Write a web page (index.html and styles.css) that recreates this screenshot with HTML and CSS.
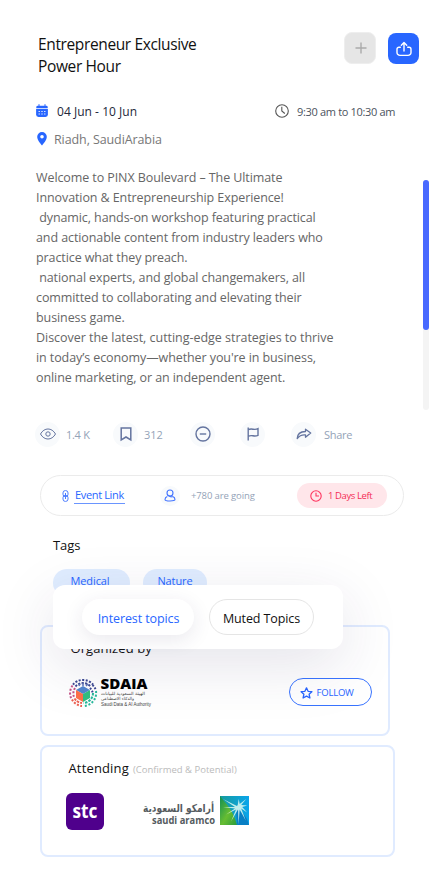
FILE: index.html
```html
<!DOCTYPE html>
<html lang="en">
<head>
<meta charset="utf-8">
<title>Entrepreneur Exclusive Power Hour</title>
<link rel="stylesheet" href="styles.css">
</head>
<body>
<main class="page">
  <header class="header">
    <h1 class="title"><span class="title-a">Entrepreneur Exclusive</span><br><span class="title-b">Power Hour</span></h1>
    <button class="icon-btn add" aria-label="Add"><svg width="12" height="12" viewBox="0 0 12 12"><path d="M6 .5v11M.5 6h11" stroke="#aaa" stroke-width="1.4"/></svg></button>
    <button class="icon-btn share" aria-label="Share"><svg width="16" height="16" viewBox="0 0 16 16" fill="none" stroke="#fff" stroke-width="1.4" stroke-linecap="round" stroke-linejoin="round"><path d="M8 10V2M5.3 4.3 8 1.6l2.700 2.700M4.300 6.200H3A2 2 0 0 0 1 8.200v3.200A3 3 0 0 0 4 14.400h8a3 3 0 0 0 3-3V8.200a2 2 0 0 0-2-2h-1.300"/></svg></button>
  </header>

  <div class="when">
    <svg width="12" height="14" viewBox="0 0 12 14"><path d="M.1 5h11.800v5.600A2.400 2.400 0 0 1 9.500 13H2.500A2.400 2.400 0 0 1 .1 10.600z" fill="#2866ff"/><path d="M.3 4.300V3q0-1.300 1.500-1.300h8.400q1.500 0 1.500 1.300v1.300z" fill="#2866ff"/><path d="M3 .2v2.300M9 .2v2.300" stroke="#2866ff" stroke-width="1"/><path d="M2.600 7.500h1.200m1.600 0h1.200m1.600 0h1.200M2.600 10h1.200m1.600 0h1.200m1.600 0h1.200" stroke="#fff" stroke-width="1.100"/></svg>
    <span class="date">04 Jun - 10 Jun</span>
    <svg class="clock" width="14" height="14" viewBox="0 0 14 14" fill="none" stroke="#555" stroke-width="1.100"><circle cx="7" cy="7" r="6.300"/><path d="M6.800 2.800V7l3 2.500"/></svg>
    <span class="time">9:30 am to 10:30 am</span>
  </div>
  <div class="where">
    <svg width="10" height="14" viewBox="0 0 10 14"><path fill="#2866ff" fill-rule="evenodd" d="M5 0a4.800 4.800 0 0 1 4.800 4.800C9.800 8.200 6.500 11.500 5 13.500 3.500 11.500.2 8.200.2 4.800A4.800 4.800 0 0 1 5 0zm0 3a1.800 1.800 0 1 0 0 3.600A1.800 1.800 0 0 0 5 3z"/></svg>
    <span class="place">Riadh, SaudiArabia</span>
  </div>

  <section class="about">
    <div class="copy">Welcome to PINX Boulevard – The Ultimate
Innovation &amp; Entrepreneurship Experience!
 dynamic, hands-on workshop featuring practical
and actionable content from industry leaders who
practice what they preach.
 national experts, and global changemakers, all
committed to collaborating and elevating their
business game.
<span class="wide">Discover the latest, cutting-edge strategies to thrive</span>
in today’s economy—whether you're in business,
online marketing, or an independent agent.</div>
    <div class="track"><div class="thumb"></div></div>
  </section>

  <div class="actions">
    <span class="act views"><i class="disc"><svg width="16" height="12" viewBox="0 0 16 12"><path d="M.5 6C4.200-.7 11.800-.7 15.500 6 11.800 12.700 4.200 12.700.5 6z"/><circle cx="8" cy="6" r="2.200"/></svg></i><b>1.4 K</b></span>
    <span class="act saves"><i class="disc"><svg width="12" height="14" viewBox="0 0 12 14" stroke-width="1.500"><path d="M1.200.9h9.600v12L6 10l-4.800 2.900z"/></svg></i><b>312</b></span>
    <span class="act mute"><i class="disc"><svg width="16" height="16" viewBox="0 0 16 16" stroke-width="1.400"><circle cx="8" cy="8" r="7"/><path d="M4.800 8h6.400"/></svg></i></span>
    <span class="act flag"><i class="disc"><svg width="12" height="14" viewBox="0 0 12 14" stroke-width="1.400"><path d="M1.200.5v13M1.200 2.700c4-2 5.500 1 9.800-1v6.600c-4.300 2-5.800-1-9.800 1"/></svg></i></span>
    <span class="act send"><i class="disc"><svg width="16" height="12" viewBox="0 0 16 12" stroke-width="1.300" stroke-linejoin="round"><path d="M9.500 1.200 14.700 5 9.500 9.200V7C5.500 6.600 3.500 7.600 1.200 10.600 1.300 6.300 4.500 3.700 9.500 3.500z"/></svg></i><b>Share</b></span>
  </div>

  <div class="bar">
    <svg class="link-icon" width="7" height="12" viewBox="0 0 7 12" fill="none" stroke="#4a7cff" stroke-width="1"><rect x="1" y=".6" width="5" height="6" rx="2.300"/><rect x="1" y="5.400" width="5" height="6" rx="2.300"/><path d="M3.500 3v6"/></svg>
    <a class="link">Event Link</a>
    <i class="person"><svg width="12" height="13" viewBox="0 0 12 13" fill="none" stroke="#4475ff" stroke-width="1.100"><circle cx="6" cy="4" r="3"/><path d="M3.800 6.200Q6 8.500 8.500 7.600M3.300 7.500C1.500 8.200 1 9.400 1 10.400q0 1.600 5 1.600t5-1.600c0-1-.5-2.200-2.300-2.900"/></svg></i>
    <span class="going">+780 are going</span>
    <span class="left"><svg width="12" height="12" viewBox="0 0 12 12" fill="none" stroke="#ff355f" stroke-width="1.100"><circle cx="6" cy="6" r="5.200"/><path d="M6 2.700V6h3"/></svg><b>1 Days Left</b></span>
  </div>

  <section class="tags">
    <h2 class="tags-title">Tags</h2>
    <div class="chips"><span class="chip medical">Medical</span><span class="chip nature">Nature</span></div>
    <div class="popup">
      <button class="choice interest">Interest topics</button>
      <button class="choice muted">Muted Topics</button>
    </div>
  </section>

  <section class="card organizer">
    <h2 class="card-title org-title">Organized by</h2>
    <div class="org-row">
      <svg class="org-logo" width="84" height="32" viewBox="0 0 84 32">
        <g fill="none" stroke-width="2" stroke-linecap="butt">
          <g stroke="#3b4792"><path d="M4 6.600A13 13 0 0 1 24 6.600" stroke-dasharray="2 1.500"/><path d="M6.500 8.500A10 10 0 0 1 21.500 8.500" stroke-dasharray="2.200 1.300"/><path d="M23.500 7A13 13 0 0 1 26.800 12M21 10a10 10 0 0 1 2.800 5" stroke-dasharray="1.800 1.500"/></g>
          <g stroke="#c65386"><path d="M3.500 7.500A13 13 0 0 0 2.500 21" stroke-dasharray="2 1.700"/><path d="M6 10a10 10 0 0 0-.8 9.500" stroke-dasharray="2 1.500"/></g>
          <g stroke="#ee5f50"><path d="M3 21.500A13 13 0 0 0 13 28" stroke-dasharray="2 1.500"/><path d="M5.500 20.500A10 10 0 0 0 13 25" stroke-dasharray="2.500 1"/></g>
          <g stroke="#27b99b"><path d="M27 13A13 13 0 0 1 14.500 28" stroke-dasharray="2 1.700"/><path d="M24 15A10 10 0 0 1 14.500 25" stroke-dasharray="2.500 1.200"/></g>
        </g>
        <path d="m14 8 7 4-7 4-7-4z" fill="#5287cf"/><path d="m7 12 7 4v8l-7-4z" fill="#ff7049"/><path d="m14 16 7-4v8l-7 4z" fill="#31bf80"/><path d="m10 8 1-2m3 2V5m3 3 2-2" stroke="#6076b8" stroke-width="1.500"/>
        <text class="sdaia" x="31.500" y="11" textLength="47" lengthAdjust="spacingAndGlyphs">SDAIA</text>
        <text class="arabic" x="76" y="16.500" direction="rtl" textLength="44" lengthAdjust="spacingAndGlyphs">الهيئة السعودية للبيانات</text>
        <text class="arabic" x="65" y="22" direction="rtl" textLength="33" lengthAdjust="spacingAndGlyphs">والذكاء الاصطناعي</text>
        <text class="authority" x="32" y="27.500" textLength="50" lengthAdjust="spacingAndGlyphs">Saudi Data &amp; AI Authority</text>
      </svg>
      <button class="follow"><svg width="13" height="12" viewBox="0 0 13 12" fill="none" stroke="#2866ff" stroke-width="1.300" stroke-linejoin="round"><path d="m6.500.9 1.600 3.400 3.800.4-2.800 2.500.8 3.800-3.400-1.900L3.100 11l.8-3.800L1.100 4.700l3.800-.4z"/></svg>FOLLOW</button>
    </div>
  </section>

  <section class="card attending">
    <h2 class="card-title"><span class="att">Attending</span><small>(Confirmed &amp; Potential)</small></h2>
    <div class="logos">
      <svg width="38" height="37" viewBox="0 0 38 37"><rect width="38" height="37" rx="6" fill="#4f008c"/><text class="stc" x="6.500" y="24.500" textLength="25" lengthAdjust="spacingAndGlyphs">stc</text></svg>
      <svg class="aramco" width="108" height="31" viewBox="0 0 108 31">
        <defs>
          <linearGradient id="sky" x1="0" y1="0" x2="1" y2="0"><stop offset="0" stop-color="#169b9c"/><stop offset="1" stop-color="#0aa5ec"/></linearGradient>
          <linearGradient id="land" x1="0" y1="0" x2="1" y2="1"><stop offset="0" stop-color="#108d55"/><stop offset=".55" stop-color="#67bd32"/><stop offset="1" stop-color="#2b9b3c"/></linearGradient>
        </defs>
        <text class="ar-name" x="72" y="17" direction="rtl" textLength="71" lengthAdjust="spacingAndGlyphs">أرامكو السعودية</text>
        <text class="en-name" x="10" y="29" textLength="63" lengthAdjust="spacingAndGlyphs">saudi aramco</text>
        <rect x="78" y="1" width="29" height="29" fill="url(#sky)"/>
        <path d="M78 1c5 7 13 13 17 29H78z" fill="url(#land)"/><path d="M94 14c7 3 11 8 13 16H95z" fill="#087fc4"/>
        <path d="m95 11-14-7 12 8-12 0 12 1.500-9 6 10-5-5 12 7-12 .5 15 1.200-15 6 11-4.500-12 6 4-5-5.500 5-1.500-6-.5 5-6-6.500 5-1-5-1 6z" fill="#eafff4" opacity=".8"/>
      </svg>
    </div>
  </section>
</main>
</body>
</html>
```
FILE: styles.css
```css
* { box-sizing: border-box; }
body { margin: 0; background: #fff; font-family: "Open Sans", "Noto Sans", sans-serif; font-size: 12px; color: #000; }
h1, h2 { margin: 0; font-weight: 400; }
b, i { font-weight: inherit; font-style: normal; }
button { padding: 0; border: 0; font: inherit; }
svg { display: block; flex: none; overflow: visible; }
span, a, b, button { white-space: nowrap; }
.page { width: 442px; height: 890px; overflow: hidden; position: relative; display: flex; flex-direction: column; }

.header { display: flex; height: 66px; margin: 32px 0 0 38px; }
.title { width: 306px; font-size: 15.500px; line-height: 22px; padding-top: 1px; color: #111; }
.title-a { letter-spacing: -.37px; }
.title-b { letter-spacing: -.37px; }
.icon-btn { width: 32px; height: 32px; border-radius: 8px; display: flex; align-items: center; justify-content: center; }
.add { background: #e6e6e6; border: 1px solid #eee; padding-left: 2px; }
.share { background: #2866ff; margin: 1px 0 0 12px; width: 31px; height: 31px; padding-left: 1px; }

.when { display: flex; align-items: center; height: 26px; padding-left: 36px; }
.date { width: 217px; padding-left: 9px; color: #23273a; letter-spacing: .03px; }
.clock { margin-left: 10px; }
.time { margin-left: 8px; font-size: 11px; letter-spacing: -.33px; color: #4b525d; }
.where { display: flex; align-items: center; height: 30px; padding-left: 37px; color: #777; }
.place { margin-left: 7px; font-size: 12.500px; letter-spacing: -.1px; }

.about { display: flex; margin: 14px 0 0 36px; height: 242px; }
.copy { width: 387px; white-space: pre; line-height: 20px; color: #666; letter-spacing: -.09px; font-size: 12.500px; }
.wide { letter-spacing: -.03px; }
.track { width: 6px; height: 230px; margin-top: 12px; border-radius: 3px; background: #f4f4f4; }
.thumb { height: 150px; border-radius: 3px; background: #4869ff; }

.actions { display: flex; height: 26px; margin: 11px 0 0 35px; color: #94a3b8; font-size: 11px; }
.act { display: flex; align-items: center; gap: 6px; }
.disc { width: 25px; height: 25px; border-radius: 50%; background: #f8fafc; display: flex; align-items: center; justify-content: center; }
.disc svg { fill: none; stroke: #64749f; }
.views { width: 78px; letter-spacing: -.3px; }
.saves { width: 77px; }
.mute { width: 50px; }
.flag { width: 51px; }
.send { gap: 8px; letter-spacing: -.3px; }

.bar { display: flex; align-items: center; width: 364px; height: 41px; margin: 28px 0 0 40px; border: 1px solid #ebebeb; border-radius: 21px; padding-left: 21px; }
.link { margin-left: 5px; width: 51px; height: 16px; line-height: 13px; border-bottom: 1.500px solid #6a95ff; color: #2866ff; font-size: 11px; letter-spacing: -.35px; padding-left: 1px; }
.person { width: 20px; height: 20px; margin-left: 35px; border-radius: 50%; background: #f8fafc; display: flex; align-items: center; justify-content: center; }
.going { margin-left: 11px; width: 106px; font-size: 9.500px; letter-spacing: -.12px; color: #94a3b8; }
.left { display: flex; align-items: center; gap: 6px; width: 90px; height: 25px; border-radius: 13px; background: #ffe6ea; color: #f42d56; padding-left: 13px; font-size: 9.500px; letter-spacing: -.4px; }

.tags { position: relative; margin: 17px 0 0 53px; height: 92px; }
.tags-title { font-size: 13px; line-height: 24px; letter-spacing: -.1px; color: #111; }
.chips { display: flex; gap: 13px; padding-top: 12px; }
.chip { height: 28px; border-radius: 14px; background: #e0edff; color: #2866ff; line-height: 24px; font-size: 11px; text-align: center; letter-spacing: -.1px; }
.medical { width: 77px; padding-right: 3px; }
.nature { width: 64px; }
.popup { position: absolute; z-index: 2; left: 0; top: 52px; width: 290px; height: 64px; border-radius: 12px; background: #fff; box-shadow: 0 16px 60px rgba(50, 35, 90, .13); display: flex; gap: 15px; padding: 14px 0 0 29px; }
.choice { height: 36px; border-radius: 18px; background: #fff; font-size: 12.500px; letter-spacing: -.1px; padding-top: 2px; }
.interest { width: 112px; color: #2866ff; box-shadow: 0 5px 20px rgba(50, 35, 90, .1); padding-left: 1px; }
.muted { width: 105px; border: 1px solid #e5e5e5; color: #111; }

.card { border: 2px solid #e0ebff; border-radius: 8px; margin-left: 39.500px; padding-left: 27px; }
.organizer { width: 350px; height: 111px; }
.card-title { font-size: 13px; line-height: 20px; color: #111; }
.org-title { padding: 11px 0 0 2px; letter-spacing: .1px; }
.org-row { display: flex; justify-content: space-between; padding: 20px 16px 0 0; }
.follow { width: 83px; height: 28px; border: 1px solid #3974ff; border-radius: 14px; background: transparent; color: #2866ff; display: flex; align-items: center; gap: 4px; padding: 1px 0 0 10px; font-size: 9.500px; letter-spacing: -.2px; }
.attending { width: 355px; height: 112px; margin-top: 9px; padding-top: 11px; }
.att { letter-spacing: .15px; }
.card-title small { margin-left: 4px; font-size: 9.500px; color: #bbb; }
.logos { display: flex; padding-top: 13px; margin-left: -3px; }
.aramco { margin: 2px 0 0 38px; }
.sdaia { font: 800 13.500px "Open Sans", sans-serif; }
.arabic { font: 4.300px "DejaVu Sans", sans-serif; fill: #444; }
.authority { font: 4.600px "Liberation Sans", sans-serif; fill: #444; }
.stc { font: 700 19px "Open Sans", sans-serif; fill: #fff; }
.ar-name { font: 700 11px "DejaVu Sans", sans-serif; fill: #555b60; }
.en-name { font: 700 10px "Open Sans", sans-serif; fill: #555b60; }
```
